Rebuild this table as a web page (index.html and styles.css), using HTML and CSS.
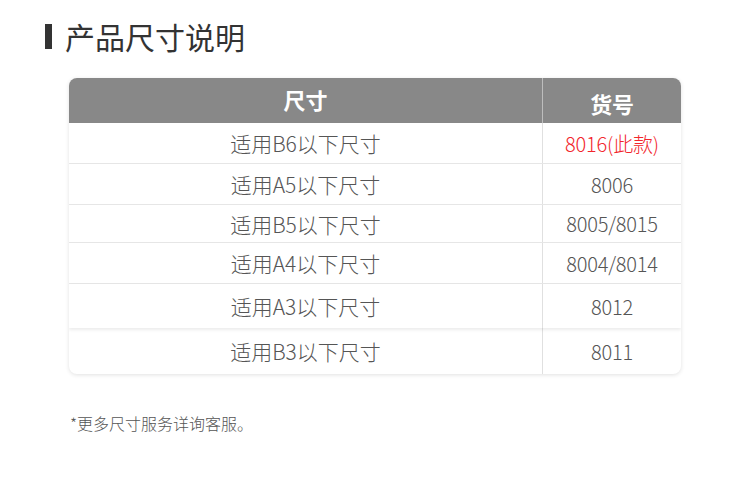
FILE: index.html
```html
<!DOCTYPE html>
<html lang="zh">
<head>
<meta charset="utf-8">
<link rel="stylesheet" href="styles.css">
</head>
<body>
<div class="page">
  <h1 class="title"><span class="bar"></span>产品尺寸说明</h1>
  <div class="table">
    <div class="row head">
      <div class="cell c1">尺寸</div>
      <div class="cell c2 h2">货号</div>
    </div>
    <div class="row r1"><div class="cell c1">适用B6以下尺寸</div><div class="cell c2 red">8016(此款)</div></div>
    <div class="row r2"><div class="cell c1">适用A5以下尺寸</div><div class="cell c2">8006</div></div>
    <div class="row r3"><div class="cell c1">适用B5以下尺寸</div><div class="cell c2">8005/8015</div></div>
    <div class="row r4"><div class="cell c1">适用A4以下尺寸</div><div class="cell c2">8004/8014</div></div>
    <div class="row r5"><div class="cell c1">适用A3以下尺寸</div><div class="cell c2">8012</div></div>
    <div class="row r6"><div class="cell c1">适用B3以下尺寸</div><div class="cell c2">8011</div></div>
  </div>
  <p class="note">*更多尺寸服务详询客服。</p>
</div>
</body>
</html>
```
FILE: styles.css
```css
* { box-sizing: border-box; }
html, body { margin: 0; padding: 0; background: #fff; }
body { font-family: "Noto Sans CJK SC", "Noto Sans", sans-serif; color: #555; }
.page { width: 750px; height: 481px; padding: 14px 0 0 45px; }
.title {
  display: flex; align-items: center; margin: 0;
  font-size: 30px; font-weight: 400; color: #333; height: 44px; line-height: 44px;
}
.bar { width: 7px; height: 25px; background: #333; margin-right: 13px; }
.table {
  margin: 20px 0 0 24px; width: 612px;
  border-radius: 8px; overflow: hidden;
  box-shadow: 0 1px 4px rgba(0,0,0,0.12);
}
.row { display: grid; grid-template-columns: 474px 138px; border-bottom: 1px solid #e6e6e6; }
.cell { display: flex; align-items: center; justify-content: center; font-size: 21px; font-weight: 300; }
.c2 { font-size: 20px; letter-spacing: -0.2px; }
.c1 { border-right: 1px solid #e0e0e0; }
.head { background: #888; border-bottom: none; height: 45px; }
.head .cell { color: #fff; font-weight: 700; font-size: 22px; }
.head .c1 { border-right: 1px solid #bdbdbd; padding-bottom: 3px; }
.head .h2 { padding-top: 5px; }
.r1 { height: 41px; }
.r2 { height: 41px; }
.r3 { height: 38px; }
.r4 { height: 41px; }
.r5 { height: 44px; border-bottom: none; box-shadow: 0 2px 3px rgba(0,0,0,0.08); position: relative; }
.r6 { height: 46px; border-bottom: none; }
.red { color: #f2262c; }
.note { margin: 37px 0 0 25px; font-size: 16px; font-weight: 300; color: #555; }
```
